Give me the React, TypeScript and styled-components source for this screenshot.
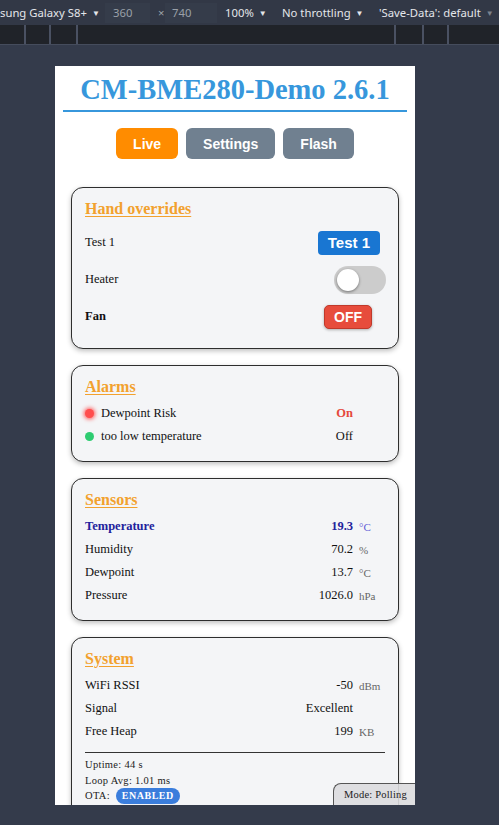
import React from "react";
import styled, { createGlobalStyle } from "styled-components";

const GlobalStyle = createGlobalStyle`
  html, body {
    margin: 0;
    padding: 0;
    background: #343b4b;
    overflow: hidden;
  }
`;

const serif = `"Liberation Serif", "Times New Roman", serif`;
const sans = `"Liberation Sans", Arial, sans-serif`;

// ---- devtools chrome ----

const Shell = styled.div`
  width: 499px;
  height: 825px;
  display: flex;
  flex-direction: column;
  background: #343b4b;
  overflow: hidden;
`;

const Toolbar = styled.div`
  height: 25px;
  flex: none;
  display: flex;
  align-items: center;
  background: #323846;
  font-family: "Noto Sans", "Open Sans", sans-serif;
  font-size: 11.3px;
  color: #e4e6ea;
  white-space: nowrap;
  overflow: hidden;
`;

const ToolItem = styled.div<{ $w?: number; $pl?: number; $muted?: boolean; $field?: boolean }>`
  flex: none;
  width: ${(p) => (p.$w ? `${p.$w}px` : "auto")};
  padding-left: ${(p) => p.$pl ?? 0}px;
  box-sizing: border-box;
  height: 20px;
  line-height: 20px;
  color: ${(p) => (p.$muted ? "#9aa0a8" : "#e4e6ea")};
  background: ${(p) => (p.$field ? "#353c4a" : "transparent")};
`;

const Caret = styled.span<{ $dim?: boolean }>`
  font-size: 8px;
  margin-left: 5px;
  vertical-align: 1px;
  color: ${(p) => (p.$dim ? "#7d838e" : "#e4e6ea")};
`;

const Ruler = styled.div`
  height: 19px;
  flex: none;
  display: grid;
  grid-template-columns: 26px 25px 27px 318px 28px 25px 1fr;
  background: #202329;
  border-bottom: 1px solid #454c5c;
`;

const RulerCell = styled.div`
  border-right: 2px solid #4a5162;
  &:last-child {
    border-right: none;
  }
`;

const Stage = styled.div`
  flex: 1;
  padding: 21px 0 0 55px;
`;

const Viewport = styled.div`
  position: relative;
  width: 360px;
  height: 739px;
  background: #ffffff;
  overflow: hidden;
  font-family: ${serif};
  color: #111;
`;

// ---- page ----

const Page = styled.div`
  padding: 8px;
`;

const Title = styled.h1`
  margin: 0;
  padding-bottom: 4px;
  border-bottom: 2px solid #3797dc;
  font: bold 28.5px/32px ${serif};
  color: #3797dc;
  text-align: center;
  white-space: nowrap;
`;

const Nav = styled.nav`
  margin-top: 16px;
  display: flex;
  justify-content: center;
  gap: 8px;
`;

const NavButton = styled.button<{ $active?: boolean }>`
  height: 31px;
  padding: 0 17px;
  border: none;
  border-radius: 6px;
  background: ${(p) => (p.$active ? "#ff8c00" : "#708090")};
  color: #fff;
  font: bold 14px ${sans};
`;

const Cards = styled.main`
  padding: 28px 8px 0;
  display: flex;
  flex-direction: column;
  gap: 16px;
`;

const Card = styled.section`
  background: #f4f5f7;
  border: 1px solid #2e2e2e;
  border-radius: 12px;
  padding: 10px 13px 13px;
  box-shadow: 0 2px 5px rgba(0, 0, 0, 0.25);
`;

const CardTitle = styled.h3`
  margin: 0 0 4px;
  font: bold 16px/22px ${serif};
  color: #f2a12e;
  text-decoration: underline;
  text-underline-offset: 2px;
`;

const ControlRow = styled.div`
  min-height: 37px;
  display: flex;
  align-items: center;
  justify-content: space-between;
  font-size: 12.5px;
`;

const ControlLabel = styled.span<{ $bold?: boolean }>`
  font-weight: ${(p) => (p.$bold ? "bold" : "normal")};
`;

const ActionButton = styled.button`
  height: 24px;
  padding: 0 10px;
  margin-right: 5px;
  border: none;
  border-radius: 4px;
  background: #1976d2;
  color: #fff;
  font: bold 15px ${sans};
`;

const StateButton = styled.button<{ $on?: boolean }>`
  height: 24px;
  width: 48px;
  margin-right: 13px;
  border: 1px solid ${(p) => (p.$on ? "#1e8449" : "#c0392b")};
  border-radius: 5px;
  background: ${(p) => (p.$on ? "#27ae60" : "#e74c3c")};
  color: #fff;
  font: bold 14px ${sans};
  box-shadow: 0 1px 3px rgba(0, 0, 0, 0.3);
`;

const Switch = styled.span<{ $on?: boolean }>`
  position: relative;
  width: 52px;
  height: 28px;
  margin-right: -1px;
  border-radius: 14px;
  background: ${(p) => (p.$on ? "#2196f3" : "#cccccc")};
  &::before {
    content: "";
    position: absolute;
    top: 3px;
    left: ${(p) => (p.$on ? "27px" : "3px")};
    width: 22px;
    height: 22px;
    border-radius: 50%;
    background: #fff;
    box-shadow: 0 1px 3px rgba(0, 0, 0, 0.45);
  }
`;

const DataGrid = styled.div`
  display: grid;
  grid-template-columns: 1fr auto 26px;
  grid-auto-rows: 23px;
  column-gap: 6px;
  align-items: center;
  font-size: 12.5px;
`;

const Label = styled.span<{ $accent?: boolean }>`
  display: flex;
  align-items: center;
  gap: 7px;
  font-weight: ${(p) => (p.$accent ? "bold" : "normal")};
  color: ${(p) => (p.$accent ? "#22229c" : "#111")};
`;

const Value = styled.span<{ $accent?: boolean; $alert?: boolean }>`
  text-align: right;
  font-weight: ${(p) => (p.$accent || p.$alert ? "bold" : "normal")};
  color: ${(p) => (p.$alert ? "#e5483c" : p.$accent ? "#22229c" : "#111")};
`;

const Unit = styled.span<{ $accent?: boolean }>`
  font-size: 11px;
  color: ${(p) => (p.$accent ? "#5c5cd6" : "#666")};
`;

const Dot = styled.span<{ $color: string; $glow?: boolean }>`
  flex: none;
  width: 9px;
  height: 9px;
  border-radius: 50%;
  background: ${(p) => p.$color};
  box-shadow: ${(p) => (p.$glow ? `0 0 4px 1px ${p.$color}` : "none")};
`;

const Divider = styled.hr`
  margin: 9px 0 4px;
  border: none;
  border-top: 1px solid #333;
`;

const Meta = styled.div`
  font-size: 10.5px;
  line-height: 15.5px;
  letter-spacing: 0.3px;
  color: #222;
`;

const Badge = styled.span`
  display: inline-block;
  margin-left: 6px;
  padding: 0 6px;
  height: 16px;
  line-height: 16px;
  border-radius: 8px;
  background: #3a7ddc;
  color: #fff;
  font-weight: bold;
  font-size: 10px;
  letter-spacing: 0.5px;
`;

const ModeTag = styled.div`
  position: absolute;
  right: 0;
  bottom: 0;
  width: 82px;
  height: 22px;
  box-sizing: border-box;
  padding-left: 10px;
  line-height: 22px;
  background: rgba(220, 220, 222, 0.9);
  border: 1px solid #555;
  border-right: none;
  border-bottom: none;
  border-top-left-radius: 8px;
  font-size: 10.5px;
  letter-spacing: 0.2px;
  color: #222;
`;

type Reading = { label: string; value: string; unit?: string; accent?: boolean };

const sensors: Reading[] = [
  { label: "Temperature", value: "19.3", unit: "°C", accent: true },
  { label: "Humidity", value: "70.2", unit: "%" },
  { label: "Dewpoint", value: "13.7", unit: "°C" },
  { label: "Pressure", value: "1026.0", unit: "hPa" },
];

const system: Reading[] = [
  { label: "WiFi RSSI", value: "-50", unit: "dBm" },
  { label: "Signal", value: "Excellent" },
  { label: "Free Heap", value: "199", unit: "KB" },
];

const Readings = ({ rows }: { rows: Reading[] }) => (
  <DataGrid>
    {rows.map((r) => (
      <React.Fragment key={r.label}>
        <Label $accent={r.accent}>{r.label}</Label>
        <Value $accent={r.accent}>{r.value}</Value>
        <Unit $accent={r.accent}>{r.unit ?? ""}</Unit>
      </React.Fragment>
    ))}
  </DataGrid>
);

const App = () => {
  return (
    <>
      <GlobalStyle />
      <Shell>
        <Toolbar>
          <ToolItem $w={105}>
            sung Galaxy S8+<Caret>▼</Caret>
          </ToolItem>
          <ToolItem $w={45} $pl={8} $muted $field>
            360
          </ToolItem>
          <ToolItem $w={15} $pl={8} $muted>
            ×
          </ToolItem>
          <ToolItem $w={52} $pl={7} $muted $field>
            740
          </ToolItem>
          <ToolItem $w={58} $pl={8}>
            100%<Caret>▼</Caret>
          </ToolItem>
          <ToolItem $w={97} $pl={7}>
            No throttling<Caret>▼</Caret>
          </ToolItem>
          <ToolItem $pl={7}>
            'Save-Data': default<Caret $dim>▼</Caret>
          </ToolItem>
        </Toolbar>
        <Ruler>
          <RulerCell />
          <RulerCell />
          <RulerCell />
          <RulerCell />
          <RulerCell />
          <RulerCell />
          <RulerCell />
        </Ruler>
        <Stage>
          <Viewport>
            <Page>
              <Title>CM-BME280-Demo 2.6.1</Title>
              <Nav>
                <NavButton $active>Live</NavButton>
                <NavButton>Settings</NavButton>
                <NavButton>Flash</NavButton>
              </Nav>
              <Cards>
                <Card>
                  <CardTitle>Hand overrides</CardTitle>
                  <ControlRow>
                    <ControlLabel>Test 1</ControlLabel>
                    <ActionButton>Test 1</ActionButton>
                  </ControlRow>
                  <ControlRow>
                    <ControlLabel>Heater</ControlLabel>
                    <Switch />
                  </ControlRow>
                  <ControlRow>
                    <ControlLabel $bold>Fan</ControlLabel>
                    <StateButton>OFF</StateButton>
                  </ControlRow>
                </Card>

                <Card>
                  <CardTitle>Alarms</CardTitle>
                  <DataGrid>
                    <Label>
                      <Dot $color="#ff4d4d" $glow />
                      Dewpoint Risk
                    </Label>
                    <Value $alert>On</Value>
                    <Unit />
                    <Label>
                      <Dot $color="#2ecc71" />
                      too low temperature
                    </Label>
                    <Value>Off</Value>
                    <Unit />
                  </DataGrid>
                </Card>

                <Card>
                  <CardTitle>Sensors</CardTitle>
                  <Readings rows={sensors} />
                </Card>

                <Card>
                  <CardTitle>System</CardTitle>
                  <Readings rows={system} />
                  <Divider />
                  <Meta>Uptime: 44 s</Meta>
                  <Meta>Loop Avg: 1.01 ms</Meta>
                  <Meta>
                    OTA:<Badge>ENABLED</Badge>
                  </Meta>
                </Card>
              </Cards>
            </Page>
            <ModeTag>Mode: Polling</ModeTag>
          </Viewport>
        </Stage>
      </Shell>
    </>
  );
};

export default App;
